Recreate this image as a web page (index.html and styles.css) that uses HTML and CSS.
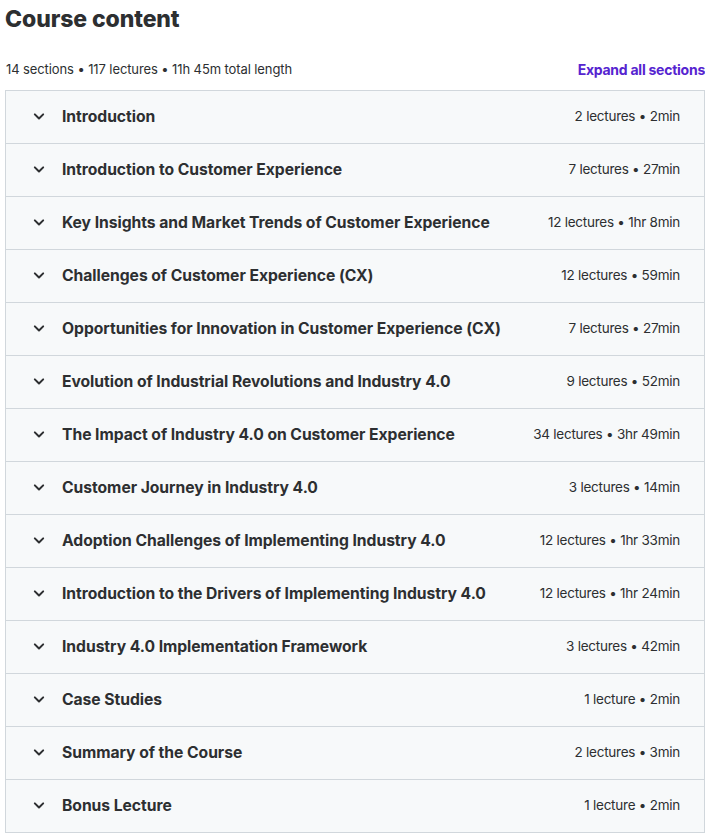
FILE: index.html
```html
<!DOCTYPE html>
<html lang="en">
<head>
<meta charset="utf-8">
<title>Course content</title>
<link rel="stylesheet" href="styles.css">
</head>
<body>
<div class="curriculum">
  <h2 class="title">Course content</h2>
  <div class="summary">
    <span class="stats">14 sections • 117 lectures • 11h 45m total length</span>
    <button class="expand">Expand all sections</button>
  </div>
  <div class="sections">
    <div class="section"><span class="chev"><svg viewBox="0 0 24 24"><path d="M7 10l5 5 5-5"/></svg></span><span class="name">Introduction</span><span class="meta">2 lectures • 2min</span></div>
    <div class="section"><span class="chev"><svg viewBox="0 0 24 24"><path d="M7 10l5 5 5-5"/></svg></span><span class="name">Introduction to Customer Experience</span><span class="meta">7 lectures • 27min</span></div>
    <div class="section"><span class="chev"><svg viewBox="0 0 24 24"><path d="M7 10l5 5 5-5"/></svg></span><span class="name">Key Insights and Market Trends of Customer Experience</span><span class="meta">12 lectures • 1hr 8min</span></div>
    <div class="section"><span class="chev"><svg viewBox="0 0 24 24"><path d="M7 10l5 5 5-5"/></svg></span><span class="name">Challenges of Customer Experience (CX)</span><span class="meta">12 lectures • 59min</span></div>
    <div class="section"><span class="chev"><svg viewBox="0 0 24 24"><path d="M7 10l5 5 5-5"/></svg></span><span class="name">Opportunities for Innovation in Customer Experience (CX)</span><span class="meta">7 lectures • 27min</span></div>
    <div class="section"><span class="chev"><svg viewBox="0 0 24 24"><path d="M7 10l5 5 5-5"/></svg></span><span class="name">Evolution of Industrial Revolutions and Industry 4.0</span><span class="meta">9 lectures • 52min</span></div>
    <div class="section"><span class="chev"><svg viewBox="0 0 24 24"><path d="M7 10l5 5 5-5"/></svg></span><span class="name">The Impact of Industry 4.0 on Customer Experience</span><span class="meta">34 lectures • 3hr 49min</span></div>
    <div class="section"><span class="chev"><svg viewBox="0 0 24 24"><path d="M7 10l5 5 5-5"/></svg></span><span class="name">Customer Journey in Industry 4.0</span><span class="meta">3 lectures • 14min</span></div>
    <div class="section"><span class="chev"><svg viewBox="0 0 24 24"><path d="M7 10l5 5 5-5"/></svg></span><span class="name">Adoption Challenges of Implementing Industry 4.0</span><span class="meta">12 lectures • 1hr 33min</span></div>
    <div class="section"><span class="chev"><svg viewBox="0 0 24 24"><path d="M7 10l5 5 5-5"/></svg></span><span class="name">Introduction to the Drivers of Implementing Industry 4.0</span><span class="meta">12 lectures • 1hr 24min</span></div>
    <div class="section"><span class="chev"><svg viewBox="0 0 24 24"><path d="M7 10l5 5 5-5"/></svg></span><span class="name">Industry 4.0 Implementation Framework</span><span class="meta">3 lectures • 42min</span></div>
    <div class="section"><span class="chev"><svg viewBox="0 0 24 24"><path d="M7 10l5 5 5-5"/></svg></span><span class="name">Case Studies</span><span class="meta">1 lecture • 2min</span></div>
    <div class="section"><span class="chev"><svg viewBox="0 0 24 24"><path d="M7 10l5 5 5-5"/></svg></span><span class="name">Summary of the Course</span><span class="meta">2 lectures • 3min</span></div>
    <div class="section"><span class="chev"><svg viewBox="0 0 24 24"><path d="M7 10l5 5 5-5"/></svg></span><span class="name">Bonus Lecture</span><span class="meta">1 lecture • 2min</span></div>
  </div>
</div>
</body>
</html>
```

FILE: styles.css
```css
* { box-sizing: border-box; }

html, body {
  margin: 0;
  padding: 0;
  background: #fff;
}

body {
  font-family: Inter, "Noto Sans", sans-serif;
  color: #2d2f31;
}

.curriculum {
  padding: 0 0 0 5px;
}

.title {
  margin: 0;
  padding-top: 4px;
  font-size: 23px;
  line-height: 30px;
  font-weight: 800;
  letter-spacing: -0.1px;
  height: 56px;
}

.summary {
  display: flex;
  justify-content: space-between;
  align-items: center;
  height: 34px;
  padding-bottom: 8px;
}

.stats {
  font-size: 13px;
  letter-spacing: -0.1px;
  padding-left: 1px;
}

.expand {
  border: 0;
  background: none;
  padding: 0;
  font-family: inherit;
  font-size: 14px;
  font-weight: 700;
  letter-spacing: -0.25px;
  color: #5624d0;
  cursor: pointer;
}

.sections {
  border: 1px solid #d1d7dc;
  border-top: 0;
}

.section {
  display: flex;
  align-items: center;
  height: 53px;
  border-top: 1px solid #d1d7dc;
  background: #f7f9fa;
  padding: 0 24px 2px 23px;
}

.chev {
  width: 20px;
  height: 20px;
  margin-right: 13px;
  display: flex;
}

.chev svg {
  width: 20px;
  height: 20px;
  fill: none;
  stroke: #2d2f31;
  stroke-width: 2.4;
  stroke-linecap: round;
  stroke-linejoin: round;
}

.name {
  flex: 1;
  font-size: 15.7px;
  font-weight: 700;
  letter-spacing: -0.05px;
}

.meta {
  font-size: 13.5px;
  letter-spacing: -0.25px;
  white-space: nowrap;
}
```
